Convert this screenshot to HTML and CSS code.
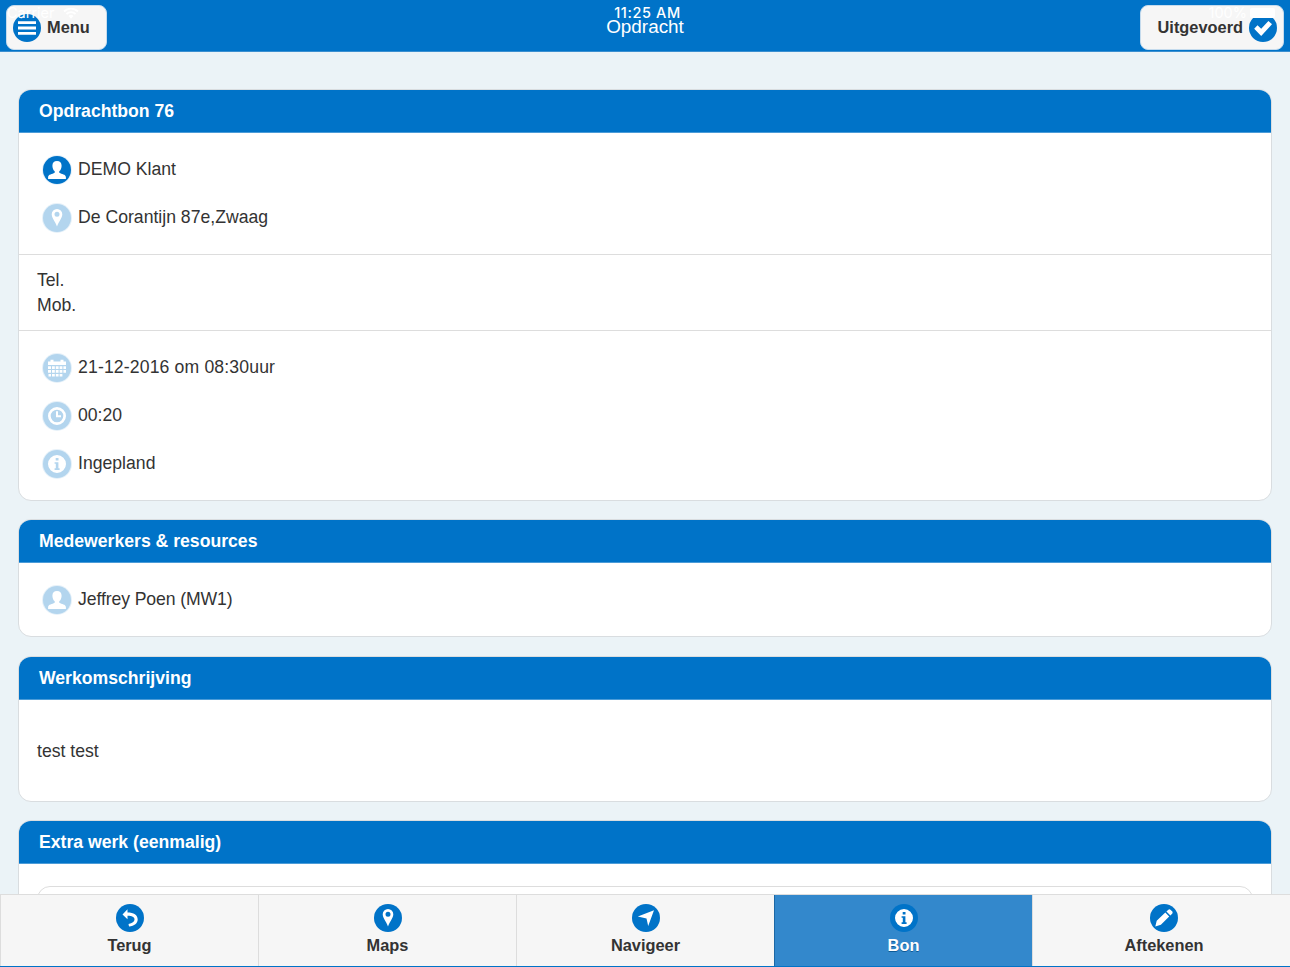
FILE: index.html
```html
<!DOCTYPE html>
<html lang="nl">
<head>
    <meta charset="UTF-8">
    <meta name="viewport" content="width=device-width, initial-scale=1.0">
    <title>Opdracht</title>
    <link rel="stylesheet" href="styles.css">
</head>
<body>
    <svg class="sprite" width="0" height="0">
        <symbol id="bars" viewBox="0 0 28 28">
            <path d="M5 7.3h18v2.8H5zM5 12.6h18v2.8H5zM5 17.9h18v2.8H5z"/>
        </symbol>
        <symbol id="check" viewBox="0 0 28 28">
            <path d="M5.200 14.700l3.300-3.400 3.700 3.500 7.200-7.900 3.600 3.300L12.200 21.900z"/>
        </symbol>
        <symbol id="user" viewBox="0 0 28 28">
            <path d="M14 5c3 0 4.600 1.900 4.600 4.700 0 2.200-.8 4.300-2.100 5.400-.5.400-.4 1.500.1 1.900 1.800 1 6.300 1.300 6.300 4.200v1.800H5.100v-1.800c0-2.900 4.500-3.200 6.300-4.200.5-.4.600-1.500.1-1.900-1.300-1.100-2.100-3.200-2.100-5.400C9.400 6.900 11 5 14 5z"/>
        </symbol>
        <symbol id="pin" viewBox="0 0 28 28">
            <path fill-rule="evenodd" d="M14 5a5.300 5.300 0 0 1 5.300 5.300C19.300 14 16 17 14 22.500 12 17 8.700 14 8.700 10.300A5.300 5.300 0 0 1 14 5zm0 2.800a2.500 2.500 0 1 0 0 5 2.500 2.500 0 0 0 0-5z"/>
        </symbol>
        <symbol id="calendar" viewBox="0 0 28 28">
            <path d="M5 11V7.500h2.500V5.800h3v1.700h7V5.800h3v1.700H23V11z"/>
            <path d="M5 12.300h3v2.600H5zM9 12.300h2.800v2.600H9zM12.800 12.300h2.800v2.600h-2.800zM16.600 12.300h2.800v2.600h-2.800zM20.400 12.300H23v2.600h-2.600zM5 16.100h3v2.600H5zM9 16.100h2.800v2.600H9zM12.800 16.100h2.800v2.600h-2.800zM16.600 16.100h2.800v2.600h-2.800zM20.400 16.100H23v2.600h-2.600zM5.500 19.900H8v2.600H5.500zM9 19.900h2.800v2.600H9zM12.800 19.900h2.800v2.600h-2.800zM16.600 19.900h2.800v2.600h-2.800z"/>
        </symbol>
        <symbol id="clock" viewBox="0 0 28 28">
            <path fill-rule="evenodd" d="M14 5a9 9 0 1 1 0 18 9 9 0 0 1 0-18zm0 2.700a6.300 6.300 0 1 0 0 12.600 6.300 6.300 0 0 0 0-12.600z"/>
            <path d="M13 9.300h2v4h3v2h-5z"/>
        </symbol>
        <symbol id="info" viewBox="0 0 28 28">
            <path fill-rule="evenodd" d="M14 5a9 9 0 1 1 0 18 9 9 0 0 1 0-18zM12.700 8v2.600h2.800V8zM11.600 12.200v1.600h1.200v4.500h-1.200V20h5v-1.700h-1.200v-6.100z"/>
        </symbol>
        <symbol id="back" viewBox="0 0 28 28">
            <path d="M6.500 10.500L11.500 5.200v3.200c6.200 0 10.200 2.500 10.200 7 0 3.700-3.300 6.300-8.700 7l-.5-2.400c3.800-.7 6-2.300 6-4.400 0-2.700-2.500-3.800-7-3.800v3.400z"/>
        </symbol>
        <symbol id="nav" viewBox="0 0 28 28">
            <path d="M22 6.300L16.200 22l-1.700-7.600L5.800 12.400z"/>
        </symbol>
        <symbol id="pencil" viewBox="0 0 28 28">
            <path d="M5.300 22.500l1.400-5.700L15.300 8.600l3.900 3.900-8.300 8.300zM16.400 7.500l1.700-1.600c.9-.8 1.800-.8 2.600 0l1.400 1.400c.7.800.7 1.700 0 2.500l-1.700 1.600z"/>
        </symbol>
    </svg>

    <header class="header">
        <a class="btn"><svg class="icon"><use href="#bars"/></svg>Menu</a>
        <h1 class="header-title">Opdracht</h1>
        <a class="btn btn-right">Uitgevoerd<svg class="icon"><use href="#check"/></svg></a>
        <div class="statusbar">
            <span class="carrier">Carrier
                <svg class="wifi" viewBox="0 0 16 12"><path d="M1 4.500a10 10 0 0 1 14 0M3.500 7a6.500 6.500 0 0 1 9 0"/><path class="wifi-dot" d="M5.500 9a3.600 3.600 0 0 1 5 0L8 11.700z"/></svg>
            </span>
            <span class="time">11:25 AM</span>
            <span class="power">100%<i class="battery"></i></span>
        </div>
    </header>

    <main class="content">
        <section class="card">
            <h2>Opdrachtbon 76</h2>
            <div class="card-row">
                <div class="line"><svg class="icon"><use href="#user"/></svg>DEMO Klant</div>
                <div class="line"><svg class="icon light"><use href="#pin"/></svg>De Corantijn 87e,Zwaag</div>
            </div>
            <div class="card-row phones">Tel.<br>Mob.</div>
            <div class="card-row">
                <div class="line date"><svg class="icon light"><use href="#calendar"/></svg>21-12-2016 om 08:30uur</div>
                <div class="line"><svg class="icon light"><use href="#clock"/></svg>00:20</div>
                <div class="line"><svg class="icon light"><use href="#info"/></svg>Ingepland</div>
            </div>
        </section>

        <section class="card">
            <h2>Medewerkers &amp; resources</h2>
            <div class="card-row">
                <div class="line name"><svg class="icon light"><use href="#user"/></svg>Jeffrey Poen (MW1)</div>
            </div>
        </section>

        <section class="card">
            <h2>Werkomschrijving</h2>
            <div class="card-row description">test test</div>
        </section>

        <section class="card">
            <h2>Extra werk (eenmalig)</h2>
            <div class="card-row extra">
                <div class="inset"></div>
            </div>
        </section>
    </main>

    <nav class="footer">
        <a class="tab"><svg class="icon"><use href="#back"/></svg>Terug</a>
        <a class="tab"><svg class="icon"><use href="#pin"/></svg>Maps</a>
        <a class="tab"><svg class="icon"><use href="#nav"/></svg>Navigeer</a>
        <a class="tab active"><svg class="icon"><use href="#info"/></svg>Bon</a>
        <a class="tab"><svg class="icon"><use href="#pencil"/></svg>Aftekenen</a>
    </nav>
</body>
</html>
```
FILE: styles.css
```css
* {
    box-sizing: border-box;
}
body {
    display: flex;
    flex-direction: column;
    height: 967px;
    margin: 0;
    overflow: hidden;
    background-color: #ebf3f7;
    color: #333;
    font-family: "Liberation Sans", Arial, sans-serif;
    font-size: 17.64px;
}
.sprite {
    position: absolute;
}
.icon {
    flex: none;
    width: 28px;
    height: 28px;
    border-radius: 50%;
    background-color: #0073c8;
    fill: #fff;
}
.icon.light {
    background-color: #b3d5ee;
}

/* header */
.header {
    position: relative;
    flex: none;
    display: flex;
    justify-content: space-between;
    height: 52px;
    padding: 5px 6px 0;
    background-color: #0073c8;
    border-bottom: 1px solid #3b8fd0;
}
.btn {
    display: flex;
    align-items: center;
    gap: 6px;
    width: 101px;
    height: 45px;
    padding: 0 6px;
    border: 1px solid #c5dbed;
    border-radius: 8px;
    background-color: #f6f6f6;
    font-size: 16.38px;
    font-weight: bold;
    line-height: 21px;
}
.btn-right {
    justify-content: flex-end;
    width: 144px;
}
.header-title {
    flex: 1;
    margin: 0 0 0 43px;
    color: #fff;
    font-size: 18.9px;
    font-weight: normal;
    line-height: 44px;
    text-align: center;
}

/* iOS status bar lies on top of the header */
.statusbar {
    position: absolute;
    top: 5px;
    left: 0;
    right: 0;
    display: flex;
    justify-content: space-between;
    padding: 0 15px 0 7px;
    color: #fff;
    font-family: Inter, sans-serif;
    font-size: 14.5px;
    line-height: 16px;
}
.carrier,
.power {
    display: flex;
    align-items: center;
    gap: 8px;
    width: 110px;
}
.power {
    justify-content: flex-end;
    gap: 3px;
}
.time {
    margin-left: 13px;
    font-weight: 500;
    letter-spacing: 0.6px;
}
.wifi {
    width: 16px;
    height: 12px;
    fill: none;
    stroke: #fff;
    stroke-width: 1.8;
}
.wifi-dot {
    fill: #fff;
    stroke: none;
}
.battery {
    width: 25px;
    height: 10px;
    border-radius: 2px;
    background-color: #fff;
}

/* cards */
.content {
    flex: 1;
    min-height: 0;
    overflow: hidden;
    padding: 37px 18px 0;
}
.card {
    margin-bottom: 18.4px;
    overflow: hidden;
    border: 1px solid #d9dde0;
    border-radius: 13px;
    background-color: #fff;
}
.card h2 {
    height: 43px;
    margin: 0;
    padding-left: 20px;
    border-bottom: 1px solid #4c9cd8;
    background-color: #0073c8;
    color: #fff;
    font-size: 17.64px;
    line-height: 42px;
}
.card-row {
    padding: 12px 24px 13px;
}
.card-row + .card-row {
    border-top: 1px solid #ddd;
}
.line {
    display: flex;
    align-items: center;
    gap: 7px;
    height: 48px;
}
.line .icon {
    position: relative;
    top: 1px;
    box-shadow: 0 0 0 1px #e6f1f9;
}
.date {
    letter-spacing: 0.14px;
}
.name {
    letter-spacing: -0.1px;
}
.phones {
    height: 76px;
    padding: 13px 18px;
    line-height: 25.2px;
}
.description {
    height: 101px;
    padding: 0 18px;
    line-height: 102px;
}
.extra {
    padding: 22px 18px;
}
.inset {
    height: 100px;
    border: 1px solid #ddd;
    border-radius: 13px;
}

/* bottom tabs */
.footer {
    flex: none;
    display: flex;
    height: 73px;
    border-top: 1px solid #ddd;
    border-bottom: 1px solid #0073c8;
    background-color: #f6f6f6;
}
.tab {
    width: 20%;
    display: flex;
    flex-direction: column;
    align-items: center;
    padding-top: 9px;
    border-left: 1px solid #ddd;
    font-size: 16.38px;
    font-weight: bold;
    line-height: 26px;
}
.tab.active {
    border-left-color: #1c68a5;
    background-color: #3388cc;
    color: #fff;
    text-shadow: 0 1px 0 #0d5a96;
}
.tab.active + .tab {
    padding-left: 5px;
}
```
